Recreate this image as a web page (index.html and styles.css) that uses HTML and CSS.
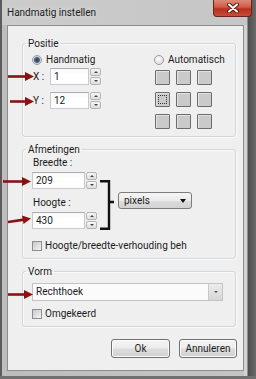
FILE: index.html
```html
<!DOCTYPE html>
<html lang="nl">
<head>
  <meta charset="UTF-8">
  <title>Handmatig instellen</title>
  <link rel="stylesheet" href="styles.css">
</head>
<body>
  <div class="window">
    <div class="titlebar">
      <span class="title">Handmatig instellen</span>
      <span class="close">
        <svg width="12" height="10" viewBox="0 0 12 10">
          <path d="M2 1.5 L10 8.5 M10 1.5 L2 8.5" stroke="#5a1a12" stroke-width="4" stroke-linecap="round"/>
          <path d="M2 1.5 L10 8.5 M10 1.5 L2 8.5" stroke="#fff" stroke-width="2" stroke-linecap="round"/>
        </svg>
      </span>
    </div>
    <div class="client">
      <fieldset class="group">
        <legend>Positie</legend>
        <div class="pos-body">
          <div class="pos-manual">
            <div class="radio"><span class="radio-dot on"></span>Handmatig</div>
            <div class="coord">
              <span class="coord-label">X :</span>
              <div class="spin">
                <span class="spin-field">1</span>
                <span class="spin-btns"><span class="spin-up"></span><span class="spin-down"></span></span>
              </div>
            </div>
            <div class="coord second">
              <span class="coord-label">Y :</span>
              <div class="spin">
                <span class="spin-field">12</span>
                <span class="spin-btns"><span class="spin-up"></span><span class="spin-down"></span></span>
              </div>
            </div>
          </div>
          <div class="pos-auto">
            <div class="radio"><span class="radio-dot"></span>Automatisch</div>
            <div class="anchor-grid">
              <span class="cell"></span><span class="cell"></span><span class="cell"></span>
              <span class="cell focus"></span><span class="cell"></span><span class="cell"></span>
              <span class="cell"></span><span class="cell"></span><span class="cell"></span>
            </div>
          </div>
        </div>
      </fieldset>

      <fieldset class="group">
        <legend>Afmetingen</legend>
        <div class="size-body">
          <div class="size-fields">
            <div class="field-label">Breedte :</div>
            <div class="spin wide">
              <span class="spin-field">209</span>
              <span class="spin-btns"><span class="spin-up"></span><span class="spin-down"></span></span>
            </div>
            <div class="field-label second">Hoogte :</div>
            <div class="spin wide">
              <span class="spin-field">430</span>
              <span class="spin-btns"><span class="spin-up"></span><span class="spin-down"></span></span>
            </div>
          </div>
          <svg class="bracket" width="14" height="50" viewBox="0 0 14 50">
            <path d="M0 1.2 H9 V48.8 H0 M9 22 H14" fill="none" stroke="#111" stroke-width="2.4"/>
          </svg>
          <div class="select">pixels<span class="select-arrow"></span></div>
        </div>
        <div class="check"><span class="box"></span>Hoogte/breedte-verhouding beh</div>
      </fieldset>

      <fieldset class="group">
        <legend>Vorm</legend>
        <div class="combo"><span class="combo-text">Rechthoek</span><span class="combo-btn"><span class="combo-arrow"></span></span></div>
        <div class="check last"><span class="box"></span>Omgekeerd</div>
      </fieldset>

      <div class="actions">
        <button class="btn ok">Ok</button>
        <button class="btn">Annuleren</button>
      </div>
    </div>

    <!-- red annotation arrows drawn over the dialog -->
    <svg class="arrow a-x" width="26" height="9" viewBox="0 0 26 9"><path d="M0 4.5 H19" stroke="#8a1212" stroke-width="2.6"/><polygon points="17,0 26,4.5 17,9" fill="#8a1212"/></svg>
    <svg class="arrow a-y" width="24" height="9" viewBox="0 0 24 9"><path d="M0 4.5 H17" stroke="#8a1212" stroke-width="2.6"/><polygon points="15,0 24,4.5 15,9" fill="#8a1212"/></svg>
    <svg class="arrow a-w" width="28" height="9" viewBox="0 0 28 9"><path d="M0 4.5 H21" stroke="#8a1212" stroke-width="2.6"/><polygon points="19,0 28,4.5 19,9" fill="#8a1212"/></svg>
    <svg class="arrow a-h" width="23" height="10" viewBox="0 0 23 10"><path d="M0 7 L16 4.6" stroke="#8a1212" stroke-width="2.6"/><polygon points="14,0.5 23,3.5 15.5,9" fill="#8a1212"/></svg>
    <svg class="arrow a-shape" width="25" height="9" viewBox="0 0 25 9"><path d="M0 4.5 H18" stroke="#8a1212" stroke-width="2.6"/><polygon points="16,0 25,4.5 16,9" fill="#8a1212"/></svg>
  </div>
</body>
</html>
```

FILE: styles.css
```css
* { box-sizing: border-box; }
body {
  margin: 0;
  background: #fff;
  font-family: Roboto, 'Liberation Sans', Arial, sans-serif;
  font-size: 10px;
  color: #1c1c1c;
}
.window {
  position: relative;
  width: 256px;
  height: 379px;
  display: flex;
  flex-direction: column;
  background: linear-gradient(90deg, #5c5c5c 0, #5c5c5c 2px, #bdbdbd 2px, #c4c4c4 244px, #d2d2d2 244px, #d2d2d2 247px, #4e4e4e 248px, #6a6a6a 256px);
  border-bottom: 3px solid #707070;
}
.titlebar {
  height: 25px;
  display: flex;
  justify-content: space-between;
  padding-left: 7px;
  background: linear-gradient(90deg, #5c5c5c 0, #5c5c5c 2px, #cbcbcb 2px, #c6c6c6 247px, #4e4e4e 248px, #6a6a6a 256px);
}
.title {
  margin-top: 6px;
  line-height: 14px;
  font-size: 10px;
  color: #202020;
  text-shadow: 0 0 6px #e8e8e8;
}
.close {
  width: 39px;
  height: 17px;
  margin-right: 4px;
  display: flex;
  align-items: center;
  justify-content: center;
  border: 1px solid #6a2419;
  border-top: none;
  border-radius: 0 0 4px 4px;
  background: linear-gradient(#dd8a78 0, #cc5a46 45%, #b8301f 55%, #c64c36 100%);
}
.client {
  flex: 1;
  margin: 0 12px 5px 7px;
  background: #efefef;
  border: 1px solid #8d8d8d;
}
.group {
  margin: 11px 7px 0 14px;
  padding: 0;
  width: 214px;
  border: 1px solid #d0d6da;
  border-radius: 3px;
  box-shadow: inset 1px 1px 0 #fafafa, 1px 1px 0 #fafafa;
}
.group + .group { margin-top: 6px; }
.group legend {
  margin-left: 3px;
  padding: 0 2px;
  line-height: 13px;
}
.pos-body {
  display: flex;
  padding: 3px 0 7px 9px;
}
.pos-manual { width: 121px; }
.radio {
  display: flex;
  align-items: center;
  gap: 4px;
  height: 13px;
}
.radio-dot {
  width: 10px;
  height: 10px;
  border-radius: 50%;
  border: 1px solid #9a9a9a;
  background: radial-gradient(circle at 40% 35%, #fdfdfd, #d6d6d6);
}
.radio-dot.on {
  background: radial-gradient(circle, #2b3f5a 0, #4b6583 2.5px, #c9d2dc 3.5px, #eeeeee 5px);
}
.coord {
  display: flex;
  margin-top: 2px;
}
.coord.second { margin-top: 7px; }
.coord-label {
  width: 18px;
  padding-left: 1px;
  line-height: 17px;
}
.spin {
  display: flex;
  width: 51px;
  height: 17px;
}
.spin.wide { width: 65px; }
.spin-field {
  flex: 1;
  padding-left: 3px;
  line-height: 15px;
  border: 1px solid #c6c9cd;
  border-top-color: #a9acb1;
  background: linear-gradient(#f6f6f6, #ffffff 40%);
}
.spin-btns {
  width: 11px;
  margin-left: 1px;
  display: flex;
  flex-direction: column;
  gap: 1px;
}
.spin-up, .spin-down {
  flex: 1;
  display: flex;
  align-items: center;
  justify-content: center;
  border: 1px solid #b4b4b4;
  border-radius: 2px;
  background: linear-gradient(#f7f7f7, #dedede);
}
.spin-up::after, .spin-down::after {
  content: '';
  border-left: 2px solid transparent;
  border-right: 2px solid transparent;
}
.spin-up::after { border-bottom: 2px solid #444; }
.spin-down::after { border-top: 2px solid #444; }
.pos-auto { padding-left: 1px; }
.anchor-grid {
  display: grid;
  grid-template-columns: repeat(3, 15px);
  grid-auto-rows: 15px;
  column-gap: 6px;
  row-gap: 7px;
  margin: 4px 0 0 1px;
}
.cell {
  border: 1px solid #6c6c6c;
  background: #cacaca;
  box-shadow: inset 1px 1px 0 #e2e2e2;
  border-radius: 1px;
}
.cell.focus {
  outline: 1px dotted #333;
  outline-offset: -4px;
}
.size-body {
  display: flex;
  align-items: flex-start;
  padding-left: 9px;
}
.size-fields { width: 65px; }
.field-label {
  padding-left: 1px;
  line-height: 13px;
  margin-bottom: 3px;
}
.field-label.second { margin-top: 7px; }
.bracket {
  margin: 24px 0 0 3px;
}
.select {
  position: relative;
  margin: 36px 0 0 4px;
  width: 74px;
  height: 17px;
  padding-left: 5px;
  line-height: 15px;
  border: 1px solid #7c7c7c;
  border-radius: 3px;
  background: linear-gradient(#f4f4f4 0, #ebebeb 50%, #dddddd 50%, #d2d2d2 100%);
}
.select-arrow {
  position: absolute;
  right: 5px;
  top: 6px;
  border-left: 3px solid transparent;
  border-right: 3px solid transparent;
  border-top: 4px solid #111;
}
.check {
  display: flex;
  align-items: center;
  gap: 3px;
  height: 13px;
  margin: 9px 0 6px 9px;
  white-space: nowrap;
}
.box {
  flex: none;
  width: 10px;
  height: 10px;
  border: 1px solid #8e8e8e;
  background: linear-gradient(135deg, #c8c8c8, #f4f4f4);
}
.combo {
  display: flex;
  margin: 5px 0 0 9px;
  width: 191px;
  height: 18px;
  border: 1px solid #c3c3c3;
  background: #fbfbfb;
}
.combo-text {
  flex: 1;
  padding-left: 3px;
  line-height: 16px;
}
.combo-btn {
  width: 14px;
  display: flex;
  align-items: center;
  justify-content: center;
  border-left: 1px solid #c9c9c9;
  background: linear-gradient(#ececec, #d6d6d6);
}
.combo-arrow {
  border-left: 2px solid transparent;
  border-right: 2px solid transparent;
  border-top: 2px solid #555;
}
.check.last { margin-top: 6px; }
.actions {
  display: flex;
  justify-content: flex-end;
  gap: 9px;
  margin: 12px 6px 0 0;
}
.btn {
  width: 58px;
  height: 19px;
  padding: 0;
  font: inherit;
  color: #1c1c1c;
  border: 1px solid #727272;
  border-radius: 3px;
  background: linear-gradient(#f4f4f4 0, #ececec 48%, #dddddd 52%, #d0d0d0 100%);
  box-shadow: inset 0 0 0 1px #fbfbfb;
}
.btn.ok { width: 59px; }
.arrow { position: absolute; }
.a-x { left: 8px; top: 72px; }
.a-y { left: 10px; top: 97px; }
.a-w { left: 3px; top: 177px; }
.a-h { left: 8px; top: 215px; }
.a-shape { left: 8px; top: 290px; }
```
